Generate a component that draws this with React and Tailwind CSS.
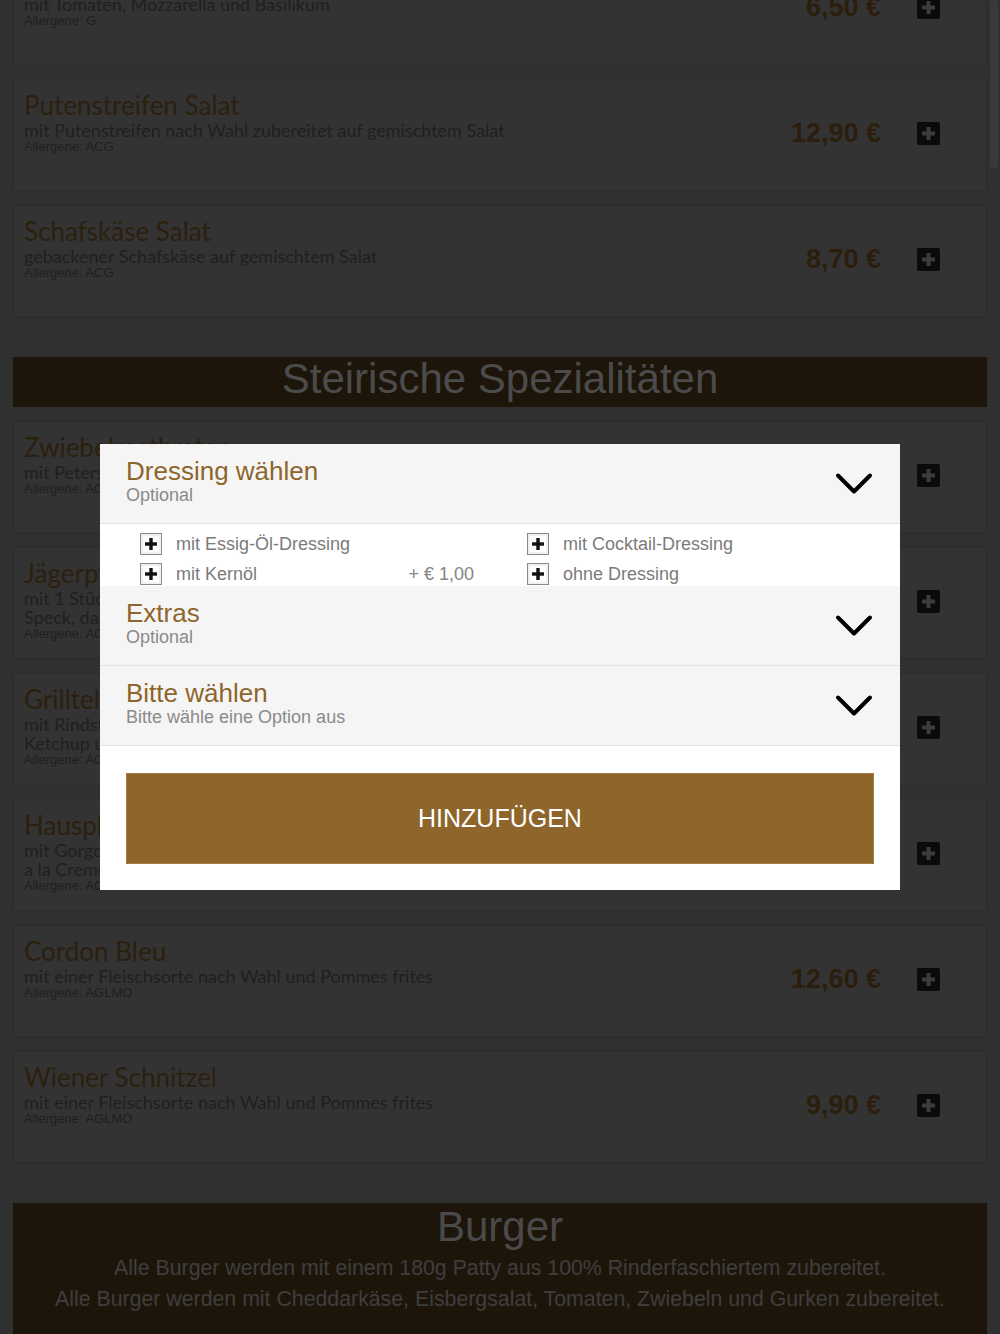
import React from 'react'

const salads = [
  { title: 'Tomaten-Mozzarella Salat', desc: ['mit Tomaten, Mozzarella und Basilikum'], allergens: 'G', price: '6,50' },
  { title: 'Putenstreifen Salat', desc: ['mit Putenstreifen nach Wahl zubereitet auf gemischtem Salat'], allergens: 'ACG', price: '12,90' },
  { title: 'Schafskäse Salat', desc: ['gebackener Schafskäse auf gemischtem Salat'], allergens: 'ACG', price: '8,70' },
]

const styrian = [
  { title: 'Zwiebelrostbraten', desc: ['mit Petersilerdäpfel und Röstzwiebeln'], allergens: 'ACGLM', price: '16,90' },
  { title: 'Jägerpfandl', desc: ['mit 1 Stück Schweinsschnitzel, Champignonrahmsauce und', 'Speck, dazu Spätzle'], allergens: 'ACGLO', price: '13,90' },
  { title: 'Grillteller', desc: ['mit Rindsteak, Schweinesteak und Hühnerbrust, Pommes frites,', 'Ketchup und Kräuterbutter'], allergens: 'ACGLM', price: '17,50' },
  { title: 'Hausplatte', desc: ['mit Gorgonzolasauce, Schinken und Champignons', 'a la Creme mit Spätzle'], allergens: 'ACGLO', price: '14,50' },
  { title: 'Cordon Bleu', desc: ['mit einer Fleischsorte nach Wahl und Pommes frites'], allergens: 'AGLMO', price: '12,60' },
  { title: 'Wiener Schnitzel', desc: ['mit einer Fleischsorte nach Wahl und Pommes frites'], allergens: 'AGLMO', price: '9,90' },
]

const PlusSquare = () => (
  <svg width="23" height="23" viewBox="0 0 23 23">
    <rect x="0" y="0" width="23" height="23" rx="2" fill="#0b0b0b" />
    <rect x="5" y="9.5" width="13" height="4" fill="#3c3c3c" />
    <rect x="9.5" y="5" width="4" height="13" fill="#3c3c3c" />
  </svg>
)

const CheckPlus = () => (
  <svg width="22" height="22" viewBox="0 0 22 22" className="shrink-0">
    <rect x="0.5" y="0.5" width="21" height="21" fill="#fff" stroke="#8a8a8a" />
    <rect x="2" y="2" width="18" height="18" fill="none" stroke="#e2e2e2" />
    <rect x="5" y="9.3" width="12" height="3.4" fill="#111" />
    <rect x="9.3" y="5" width="3.4" height="12" fill="#111" />
  </svg>
)

const Chevron = () => (
  <svg width="38" height="23" viewBox="0 0 38 23" fill="none">
    <polyline points="3,3.5 19,19.5 35,3.5" stroke="#000" strokeWidth="4" strokeLinecap="round" strokeLinejoin="round" />
  </svg>
)

const MenuCard = ({ item }) => (
  <div className="h-[112px] shrink-0 flex justify-between border border-[#2c2c2c] bg-[#333333]">
    <div className="pl-[10px] pt-[9px]">
      <div className="font-['Lato'] text-[26px] leading-[32px] text-[#2c1f0e] whitespace-nowrap">{item.title}</div>
      {item.desc.map((line, i) => (
        <div key={i} className="font-['Lato'] text-[18px] leading-[19px] text-[#1f1f1f] whitespace-nowrap">{line}</div>
      ))}
      <div className="font-['Liberation_Sans',sans-serif] text-[13px] leading-[14px] text-[#1f1f1f]">Allergene: {item.allergens}</div>
    </div>
    <div className="flex items-center gap-[36px] pr-[46px] mb-[3px]">
      <span className="font-['Liberation_Sans',sans-serif] font-bold text-[27px] text-[#2b1e0d]">{item.price} €</span>
      <PlusSquare />
    </div>
  </div>
)

const GroupHeader = ({ title, sub }) => (
  <div className="border-b border-[#e3e3e3] bg-[#f5f5f5] pl-[26px] pr-[27px] pt-[13px] pb-[18px] flex items-center justify-between">
    <div>
      <div className="text-[26px] leading-[28px] text-[#8e652a]">{title}</div>
      <div className="text-[18px] leading-[20px] text-[#8a8a8a]">{sub}</div>
    </div>
    <div className="mt-[5px]">
      <Chevron />
    </div>
  </div>
)

const Option = ({ label, extra }) => (
  <div className="flex items-center h-[30px]">
    <CheckPlus />
    <span className="ml-[14px] text-[18px] text-[#7b7b7b] whitespace-nowrap">{label}</span>
    {extra && <span className="ml-auto pr-[53px] text-[18px] text-[#858585]">{extra}</span>}
  </div>
)

export default function App() {
  return (
    <div className="relative h-[1334px] overflow-hidden bg-[#303030]">
      <div className="flex flex-col gap-[14px] px-[13px] -mt-[47px]">
        {salads.map((item) => (
          <MenuCard key={item.title} item={item} />
        ))}

        <div className="mt-[26px] h-[50px] shrink-0 bg-[#1e150a] text-center font-['Liberation_Sans',sans-serif] text-[42px] leading-[44px] text-[#4b4b4b]">
          Steirische Spezialitäten
        </div>

        {styrian.map((item) => (
          <MenuCard key={item.title} item={item} />
        ))}

        <div className="mt-[26px] pb-[40px] shrink-0 bg-[#1e150a] text-center font-['Liberation_Sans',sans-serif]">
          <div className="text-[42px] leading-[48px] text-[#4a4a4a]">Burger</div>
          <div className="mt-[2px] text-[21.3px] leading-[31px] text-[#3e3e3e]">Alle Burger werden mit einem 180g Patty aus 100% Rinderfaschiertem zubereitet.</div>
          <div className="text-[21.3px] leading-[31px] text-[#3e3e3e]">Alle Burger werden mit Cheddarkäse, Eisbergsalat, Tomaten, Zwiebeln und Gurken zubereitet.</div>
        </div>
      </div>

      {/* scrollbar thumb */}
      <div className="absolute top-0 right-[2px] w-[8px] h-[168px] rounded-full bg-[#3a3a3a]" />

      {/* modal */}
      <div className="fixed inset-0 flex items-center justify-center">
        <div className="w-[800px] bg-white font-['Liberation_Sans',sans-serif]">
          <GroupHeader title="Dressing wählen" sub="Optional" />
          <div className="h-[62px] overflow-hidden pl-[40px] pt-[5px] grid grid-cols-[387px_1fr]">
            <div>
              <Option label="mit Essig-Öl-Dressing" />
              <Option label="mit Kernöl" extra="+ € 1,00" />
            </div>
            <div>
              <Option label="mit Cocktail-Dressing" />
              <Option label="ohne Dressing" />
            </div>
          </div>
          <GroupHeader title="Extras" sub="Optional" />
          <GroupHeader title="Bitte wählen" sub="Bitte wähle eine Option aus" />
          <div className="px-[26px] pt-[27px] pb-[26px]">
            <button className="w-full h-[91px] bg-[#8e652a] border border-[#a77d40] text-white text-[25px]">
              HINZUFÜGEN
            </button>
          </div>
        </div>
      </div>
    </div>
  )
}
